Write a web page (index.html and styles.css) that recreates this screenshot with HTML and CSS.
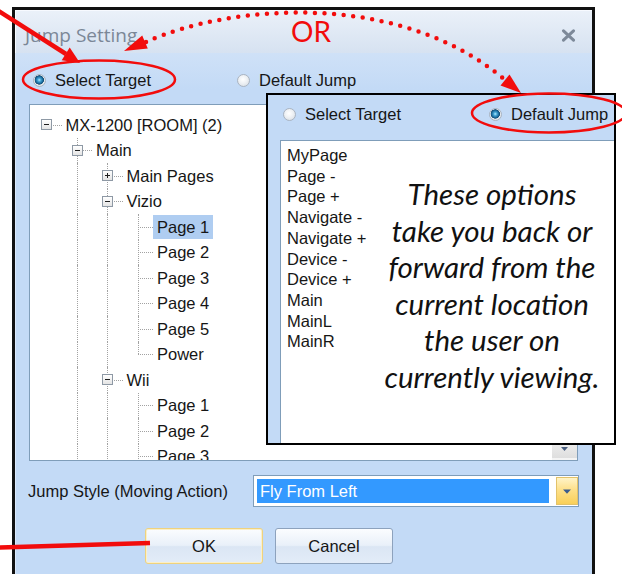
FILE: index.html
```html
<!DOCTYPE html>
<html lang="en">
<head>
<meta charset="utf-8">
<title>Jump Setting</title>
<link rel="stylesheet" href="styles.css">
</head>
<body>
<div class="stage">
  <div class="window">
    <div class="titlebar">
      <span class="title">Jump Setting</span>
      <svg class="close" width="15" height="13" viewBox="0 0 15 13"><path d="M2.5 1.8 L12.5 11.2 M12.5 1.8 L2.5 11.2" stroke="#7d8999" stroke-width="3" stroke-linecap="round"/></svg>
    </div>
    <div class="body">
      <div class="choices">
        <label class="opt"><span class="radio on"></span>Select Target</label>
        <label class="opt"><span class="radio"></span>Default Jump</label>
      </div>

      <div class="tree">
        <div class="tree-items">
          <div class="row"><span class="cell node root"><i class="exp"></i></span><span class="label">MX-1200 [ROOM] (2)</span></div>
          <div class="row"><span class="cell"></span><span class="cell node more"><i class="exp"></i></span><span class="label">Main</span></div>
          <div class="row"><span class="cell"></span><span class="cell pipe"></span><span class="cell node more"><i class="exp plus"></i></span><span class="label">Main Pages</span></div>
          <div class="row"><span class="cell"></span><span class="cell pipe"></span><span class="cell node more"><i class="exp"></i></span><span class="label">Vizio</span></div>
          <div class="row"><span class="cell"></span><span class="cell pipe"></span><span class="cell pipe"></span><span class="cell node more"></span><span class="label sel">Page 1</span></div>
          <div class="row"><span class="cell"></span><span class="cell pipe"></span><span class="cell pipe"></span><span class="cell node more"></span><span class="label">Page 2</span></div>
          <div class="row"><span class="cell"></span><span class="cell pipe"></span><span class="cell pipe"></span><span class="cell node more"></span><span class="label">Page 3</span></div>
          <div class="row"><span class="cell"></span><span class="cell pipe"></span><span class="cell pipe"></span><span class="cell node more"></span><span class="label">Page 4</span></div>
          <div class="row"><span class="cell"></span><span class="cell pipe"></span><span class="cell pipe"></span><span class="cell node more"></span><span class="label">Page 5</span></div>
          <div class="row"><span class="cell"></span><span class="cell pipe"></span><span class="cell pipe"></span><span class="cell node"></span><span class="label">Power</span></div>
          <div class="row"><span class="cell"></span><span class="cell pipe"></span><span class="cell node more"><i class="exp"></i></span><span class="label">Wii</span></div>
          <div class="row"><span class="cell"></span><span class="cell pipe"></span><span class="cell pipe"></span><span class="cell node more"></span><span class="label">Page 1</span></div>
          <div class="row"><span class="cell"></span><span class="cell pipe"></span><span class="cell pipe"></span><span class="cell node more"></span><span class="label">Page 2</span></div>
          <div class="row"><span class="cell"></span><span class="cell pipe"></span><span class="cell pipe"></span><span class="cell node more"></span><span class="label">Page 3</span></div>
        </div>
        <div class="vscroll">
          <div class="track"></div>
          <div class="sb-btn"><svg width="7" height="4" viewBox="0 0 7 4"><path d="M0 0H7L3.5 4Z" fill="#4a5f80"/></svg></div>
        </div>
      </div>

      <div class="style-row">
        <span class="style-label">Jump Style (Moving Action)</span>
        <div class="combo">
          <span class="combo-value">Fly From Left</span>
          <span class="combo-btn"><svg width="8" height="5" viewBox="0 0 8 5"><path d="M0 0.5H8L4 4.8Z" fill="#3b5c8e"/></svg></span>
        </div>
      </div>

      <div class="buttons">
        <button class="btn default" type="button">OK</button>
        <button class="btn" type="button">Cancel</button>
      </div>
    </div>
  </div>

  <div class="callout">
    <div class="choices">
      <label class="opt"><span class="radio"></span>Select Target</label>
      <label class="opt"><span class="radio on"></span>Default Jump</label>
    </div>
    <div class="list">
      <div class="list-items">
        <div>MyPage</div>
        <div>Page -</div>
        <div>Page +</div>
        <div>Navigate -</div>
        <div>Navigate +</div>
        <div>Device -</div>
        <div>Device +</div>
        <div>Main</div>
        <div>MainL</div>
        <div>MainR</div>
      </div>
      <p class="note">These options<br>take you back or<br>forward from the<br>current location<br>the user on<br>currently viewing.</p>
    </div>
  </div>

  <svg class="marks" width="622" height="574" viewBox="0 0 622 574">
    <g fill="none" stroke="#f20c0c">
      <line x1="-4" y1="9.3" x2="66" y2="54" stroke-width="4.5"/>
      <ellipse cx="99" cy="79.5" rx="76" ry="19" stroke-width="2.5"/>
      <ellipse cx="549" cy="113" rx="77" ry="19.5" stroke-width="2.5"/>
      <path d="M146 42 C230 4, 400 -10, 505 80" stroke-width="4.5" stroke-linecap="round" stroke-dasharray="0 9.6"/>
      <line x1="-2" y1="547.5" x2="150" y2="543" stroke-width="4.5"/>
    </g>
    <g fill="#f20c0c">
      <polygon points="80,63 61.7,60.2 69.7,47.6"/>
      <polygon points="124,51 147.8,48.4 142.2,35.6"/>
      <polygon points="521,93 500.5,85.4 509.5,74.6"/>
    </g>
    <text class="or" x="291" y="42">OR</text>
  </svg>
</div>
</body>
</html>
```

FILE: styles.css
```css
* {
  box-sizing: border-box;
  margin: 0;
  padding: 0;
}

body {
  margin: 0;
  background: #fff;
  font-family: "Liberation Sans", Arial, sans-serif;
  font-size: 16.5px;
  color: #161616;
}

.stage {
  position: relative;
  width: 622px;
  height: 574px;
  overflow: hidden;
  background: #fff;
}

/* dialog frame */
.window {
  margin: 7px 0 0 12px;
  width: 583px;
  height: 620px;
  border: 3px solid #111;
  background: #c3daf6;
  display: flex;
  flex-direction: column;
}

.titlebar {
  flex: none;
  height: 43px;
  display: flex;
  align-items: center;
  justify-content: space-between;
  padding: 6px 16px 0 10px;
  background: linear-gradient(#ebf1f9, #d6e2f1);
  box-shadow: inset 1px 1px 0 #f7faff;
}

.title {
  font-family: "Open Sans", sans-serif;
  font-size: 19px;
  color: #7b8797;
}

.close {
  display: block;
  margin-top: 1px;
}

.body {
  flex: 1;
  padding: 17px 14px 0;
  background: linear-gradient(#cfe1f7, #c3daf6 36px);
  box-shadow: inset 1px 0 0 #dce9fa;
}

/* radio choices */
.choices {
  display: flex;
  align-items: center;
  height: 20px;
  padding-left: 3.5px;
}

.opt {
  display: flex;
  align-items: center;
  gap: 9.5px;
  white-space: nowrap;
}

.opt:first-child {
  width: 204px;
}

.radio {
  flex: none;
  width: 13px;
  height: 13px;
  border-radius: 50%;
  border: 1px solid #aab4c1;
  background: radial-gradient(circle at 45% 40%, #ffffff 0, #eef1f4 45%, #d3d9e0 100%);
}

.radio.on {
  background:
    radial-gradient(circle at 48% 45%, #b4ecff 0, #3fa1d2 1.8px, #17608f 3.8px, #0e4a73 4.4px, transparent 4.9px),
    radial-gradient(circle at 45% 40%, #ffffff 0, #eef1f4 45%, #d3d9e0 100%);
}

/* tree view */
.tree {
  margin-top: 14px;
  height: 357px;
  border: 1px solid #7f9db9;
  background: #fff;
  display: flex;
  overflow: hidden;
}

.tree-items {
  flex: 1;
  padding: 7px 0 0 1px;
  overflow: hidden;
}

.row {
  display: flex;
  height: 25.5px;
}

.cell {
  flex: none;
  width: 30.5px;
  position: relative;
}

.cell.pipe::before,
.cell.node::before {
  content: "";
  position: absolute;
  left: 15px;
  top: 0;
  bottom: 0;
  border-left: 1px dotted #a2a2a2;
}

.cell.node::before {
  bottom: 50%;
}

.cell.node.more::before {
  bottom: 0;
}

.cell.node.root::before {
  display: none;
}

.cell.node::after {
  content: "";
  position: absolute;
  left: 15px;
  right: 0;
  top: 50%;
  border-top: 1px dotted #a2a2a2;
}

.exp {
  position: absolute;
  z-index: 1;
  left: 10px;
  top: 50%;
  margin-top: -5.5px;
  width: 11px;
  height: 11px;
  border: 1px solid #8e99a5;
  background: linear-gradient(#ffffff, #e4e4e4);
}

.exp::before {
  content: "";
  position: absolute;
  left: 2px;
  right: 2px;
  top: 4px;
  height: 1px;
  background: #1e1e1e;
}

.exp.plus::after {
  content: "";
  position: absolute;
  top: 2px;
  bottom: 2px;
  left: 4px;
  width: 1px;
  background: #1e1e1e;
}

.label {
  align-self: center;
  padding: 0 4px;
  line-height: 24px;
  white-space: nowrap;
}

.label.sel {
  background: #afcdf1;
}

.vscroll {
  flex: none;
  width: 25px;
  display: flex;
  flex-direction: column;
  background: #f4f4f4;
}

.track {
  flex: 1;
}

.sb-btn {
  height: 19px;
  margin-bottom: 2px;
  display: flex;
  align-items: center;
  justify-content: center;
  background: linear-gradient(#f1f1f1, #dedede);
}

/* jump style row */
.style-row {
  margin-top: 14px;
  height: 32px;
  display: flex;
  align-items: center;
}

.style-label {
  flex: none;
  width: 225px;
  margin-left: -1px;
  white-space: nowrap;
}

.combo {
  flex: 1;
  height: 32px;
  margin-right: -1px;
  border: 1px solid #7f9db9;
  background: #fff;
  display: flex;
  align-items: center;
}

.combo-value {
  flex: 1;
  height: 24px;
  margin-left: 3px;
  padding-left: 3px;
  line-height: 24px;
  background: #3399ff;
  color: #fff;
}

.combo-btn {
  flex: none;
  width: 22px;
  height: 28px;
  margin-left: 7px;
  display: flex;
  align-items: center;
  justify-content: center;
  border: 1px solid #e2c26a;
  background: linear-gradient(#fff4c8, #fde08a 45%, #f9cf58);
}

/* buttons */
.buttons {
  margin-top: 21px;
  padding-left: 116px;
  display: flex;
  gap: 12px;
}

.btn {
  width: 118px;
  height: 36px;
  border: 1px solid #8da2bd;
  border-radius: 3px;
  background: linear-gradient(#fbfdff, #e9f0f9 48%, #dbe6f4 52%, #e3ecf8);
  font-family: "Liberation Sans", Arial, sans-serif;
  font-size: 16.5px;
  color: #161616;
}

.btn.default {
  border-color: #efd27e;
  box-shadow: inset 0 0 0 1px #fbf0c8;
}

/* callout panel laid over the dialog */
.callout {
  position: absolute;
  left: 266px;
  top: 93px;
  width: 350px;
  height: 352px;
  border: 2px solid #000;
  background: #c3daf6;
  overflow: hidden;
  padding: 9px 0 0 12px;
}

.callout .choices {
  padding-left: 2.5px;
}

.callout .opt:first-child {
  width: 206px;
}

.list {
  margin-top: 16px;
  height: 400px;
  border: 1px solid #7f9db9;
  border-right: none;
  background: #fff;
  display: flex;
}

.list-items {
  flex: none;
  width: 89px;
  padding: 4px 0 0 6px;
  line-height: 20.7px;
  white-space: nowrap;
}

.note {
  flex: 1;
  padding-top: 35px;
  text-align: center;
  font-family: Lato, "Open Sans", sans-serif;
  font-style: italic;
  font-size: 29.5px;
  line-height: 36.6px;
  color: #111;
}

/* red call-out marks */
.marks {
  position: absolute;
  left: 0;
  top: 0;
  pointer-events: none;
}

.or {
  font-family: Lato, sans-serif;
  font-size: 28px;
  fill: #f20c0c;
}
```
